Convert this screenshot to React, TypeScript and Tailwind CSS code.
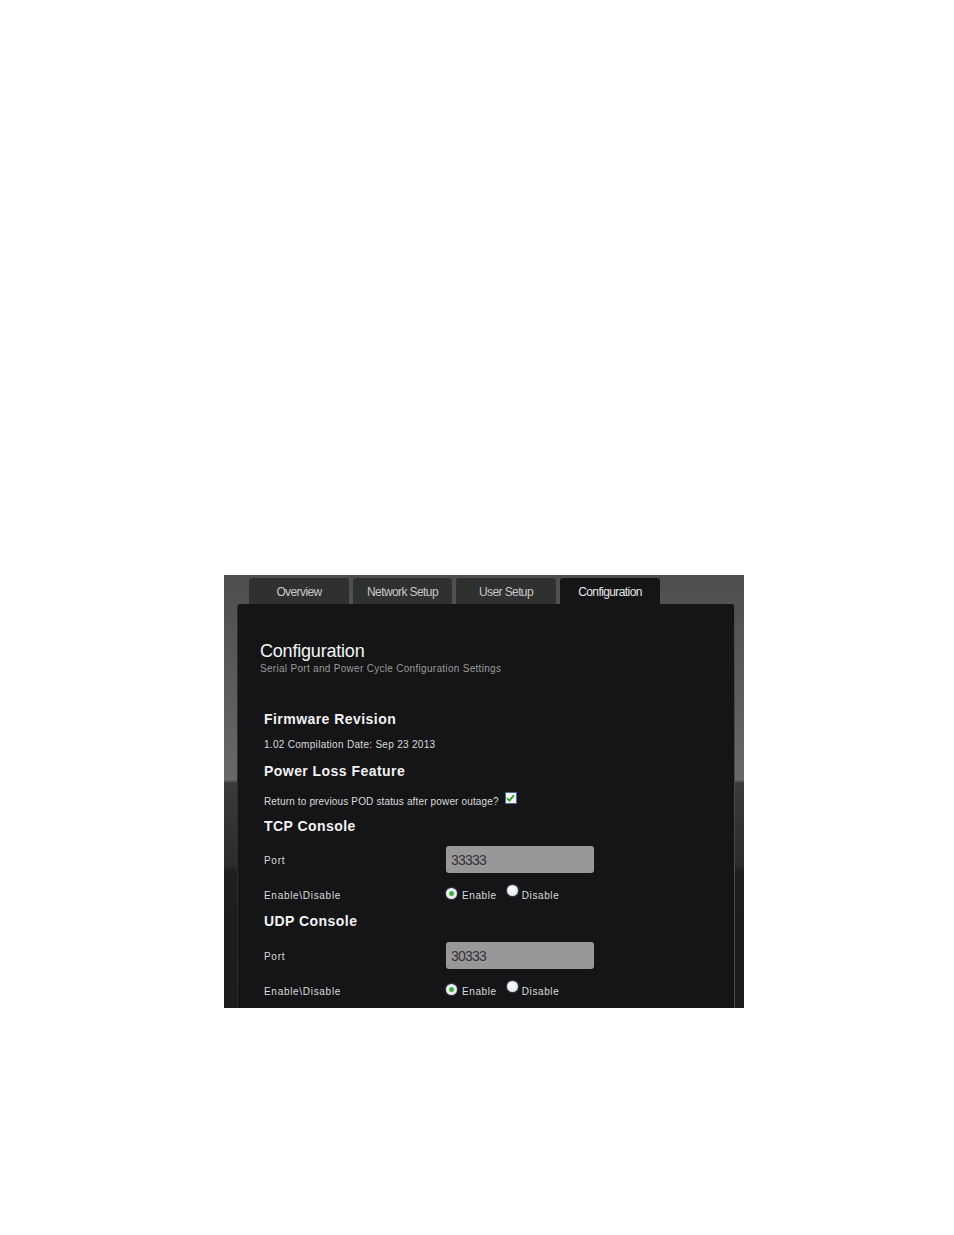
import React from "react";

const F = { fontFamily: '"Liberation Sans", Arial, sans-serif' };

function Radio({ checked }: { checked?: boolean }) {
  return (
    <span className="relative inline-flex h-[11px] w-[11px] items-center justify-center rounded-full bg-[radial-gradient(circle_at_40%_35%,#ffffff,#d8dde6)] shadow-[0_0_2px_#8aa0c0]">
      {checked && <span className="h-[5px] w-[5px] rounded-full bg-[#3fae3f]" />}
    </span>
  );
}

function Tab({ label, active, w }: { label: string; active?: boolean; w: string }) {
  return (
    <div
      className={
        "flex h-[26px] items-center justify-center rounded-t-[3px] pt-[1px] text-[12px] tracking-[-0.6px] " +
        w +
        (active ? " bg-[#151417] text-[#e6e6e6]" : " bg-[#2f3030] text-[#c8c8c8]")
      }
    >
      {label}
    </div>
  );
}

function Heading({ children, mt }: { children: React.ReactNode; mt: string }) {
  return (
    <div className={"h-[20px] leading-[20px] text-[14px] font-bold tracking-[0.45px] text-[#f2f2f2] " + mt}>{children}</div>
  );
}

function EnableRow({ mt }: { mt: string }) {
  return (
    <div className={"flex h-[20px] items-center pt-[2px] text-[10px] tracking-[0.6px] text-[#dcdcdc] " + mt}>
      <div className="w-[182px] tracking-[0.7px]">Enable\Disable</div>
      <div className="flex items-center">
        <span className="mb-[5px]"><Radio checked /></span>
        <span className="ml-[5px]">Enable</span>
        <span className="mb-[5px] ml-[10px]"><Radio /></span>
        <span className="ml-[4px]">Disable</span>
      </div>
    </div>
  );
}

function PortRow({ value, mt }: { value: string; mt: string }) {
  return (
    <div className={"flex h-[27px] items-center text-[10px] tracking-[0.7px] text-[#dcdcdc] " + mt}>
      <div className="w-[182px] pt-[2px]">Port</div>
      <div className="flex h-[27px] w-[148px] items-center rounded-[3px] bg-[#9a979b] pl-[5px] pt-[1px] text-[14px] tracking-[-0.8px] text-[#353335]">
        {value}
      </div>
    </div>
  );
}

export default function App() {
  return (
    <div className="min-h-[1235px] w-[954px] bg-white pl-[224px] pt-[575px]" style={F}>
      <div className="h-[433px] w-[520px] overflow-hidden bg-[linear-gradient(to_bottom,#4e4e4e_0px,#5c5c5c_120px,#686868_205px,#3a3a3a_208px,#2c2c2c_290px,#1e1e1e_297px,#1c1c1c_433px)]">
        <div className="flex gap-[4px] pl-[25px] pt-[3px]">
          <Tab label="Overview" w="w-[100px]" />
          <Tab label="Network Setup" w="w-[99px]" />
          <Tab label="User Setup" w="w-[100px]" />
          <Tab label="Configuration" w="w-[100px]" active />
        </div>
        <div className="ml-[13px] h-[420px] w-[498px] rounded-t-[3px] border-x border-x-[#2e2e30] border-r-[#4a4a4a] bg-[#151417] pt-[36px]">
          <div className="pl-[22px]">
            <div className="h-[22px] text-[18px] leading-[22px] tracking-[-0.2px] text-[#f4f4f4]">Configuration</div>
            <div className="h-[12px] pt-[1px] text-[10px] leading-[12px] tracking-[0.3px] text-[#9c9c9c]">
              Serial Port and Power Cycle Configuration Settings
            </div>
          </div>
          <div className="pl-[26px]">
            <Heading mt="mt-[35px]">Firmware Revision</Heading>
            <div className="mt-[9px] h-[14px] text-[10px] leading-[14px] tracking-[0.3px] text-[#dcdcdc]">
              1.02 Compilation Date: Sep 23 2013
            </div>
            <Heading mt="mt-[9px]">Power Loss Feature</Heading>
            <div className="mt-[8px] flex h-[20px] items-center text-[10px] tracking-[0.15px] text-[#dcdcdc]">
              <span className="mt-[4px]">Return to previous POD status after power outage?</span>
              <span className="mb-[2px] ml-[6px] flex h-[12px] w-[12px] items-center justify-center border border-[#4a6890] bg-[#f4f6f8]">
                <svg width="9" height="8" viewBox="0 0 9 8">
                  <path d="M1 4.2 L3.4 6.6 L8 1.2" fill="none" stroke="#2ea02e" strokeWidth="1.8" />
                </svg>
              </span>
            </div>
            <Heading mt="mt-[7px]">TCP Console</Heading>
            <PortRow value="33333" mt="mt-[10px]" />
            <EnableRow mt="mt-[11px]" />
            <Heading mt="mt-[7px]">UDP Console</Heading>
            <PortRow value="30333" mt="mt-[11px]" />
            <EnableRow mt="mt-[11px]" />
          </div>
        </div>
      </div>
    </div>
  );
}
